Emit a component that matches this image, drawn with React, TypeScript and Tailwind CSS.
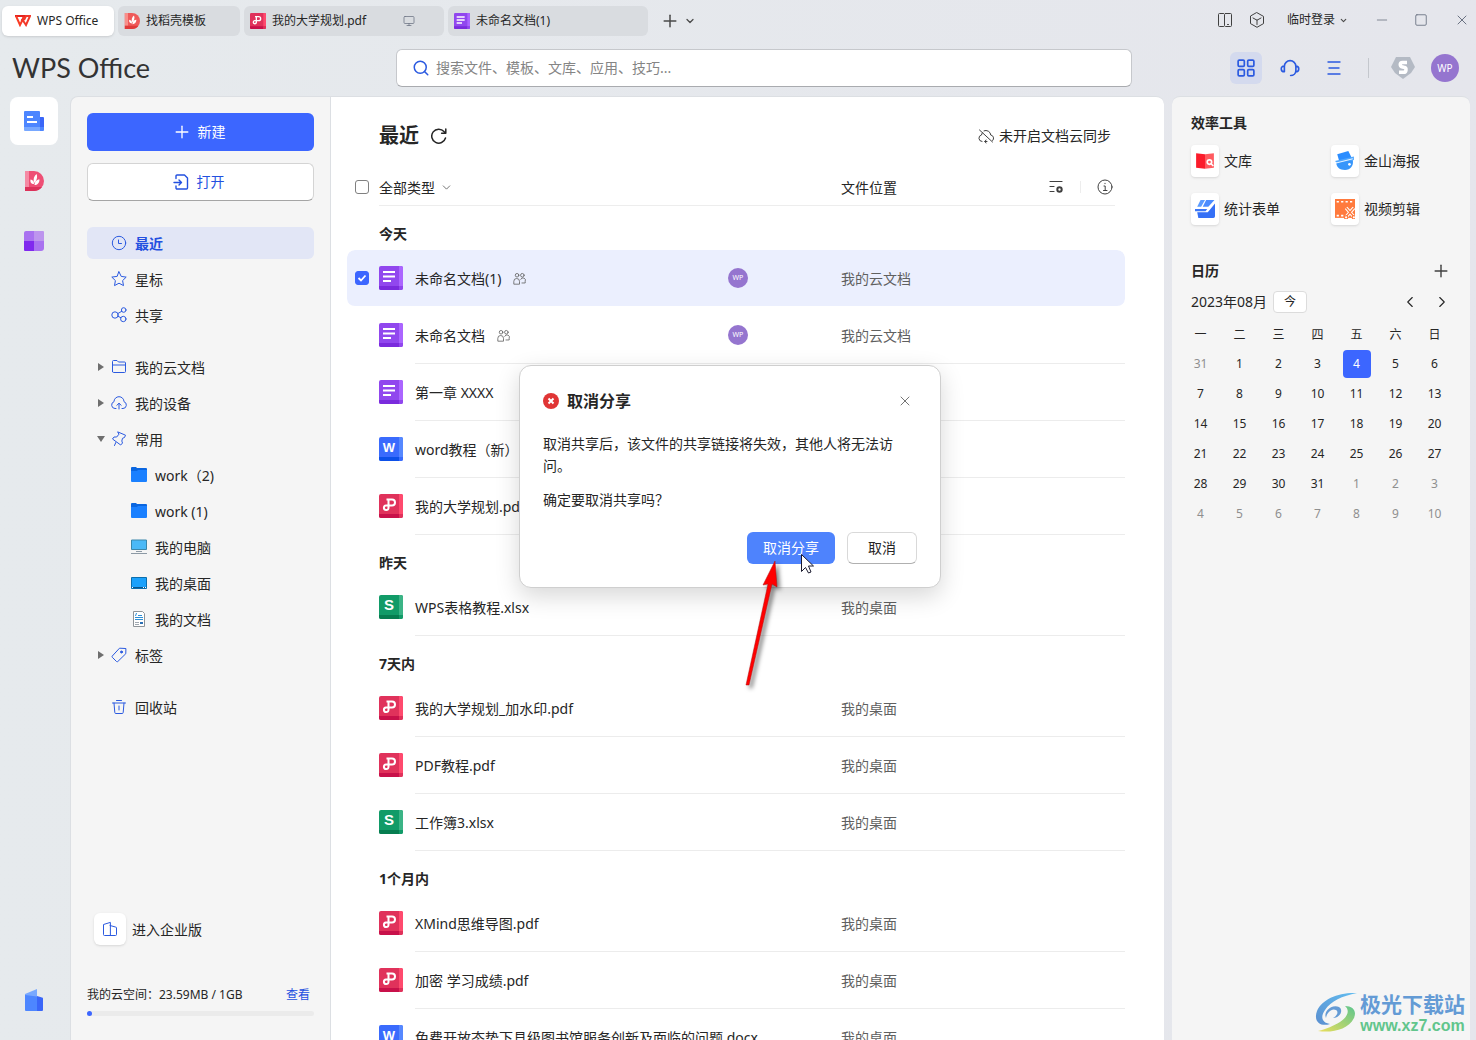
import React from 'react';
import { ChevronDown, ChevronLeft, ChevronRight, Minus, Monitor, Plus, Search, Square, X } from 'lucide-react';

type FileKind = 'doc' | 'word' | 'pdf' | 'sheet';

type FileItem = {
  name: string;
  kind: FileKind;
  location: string;
  shared?: boolean;
  selected?: boolean;
};

const groups: { label: string; files: FileItem[] }[] = [
  {
    label: '今天',
    files: [
      { name: '未命名文档(1)', kind: 'doc', location: '我的云文档', shared: true, selected: true },
      { name: '未命名文档', kind: 'doc', location: '我的云文档', shared: true },
      { name: '第一章 XXXX', kind: 'doc', location: '我的云文档' },
      { name: 'word教程（新）.docx', kind: 'word', location: '我的桌面' },
      { name: '我的大学规划.pdf', kind: 'pdf', location: '我的桌面' },
    ],
  },
  { label: '昨天', files: [{ name: 'WPS表格教程.xlsx', kind: 'sheet', location: '我的桌面' }] },
  {
    label: '7天内',
    files: [
      { name: '我的大学规划_加水印.pdf', kind: 'pdf', location: '我的桌面' },
      { name: 'PDF教程.pdf', kind: 'pdf', location: '我的桌面' },
      { name: '工作簿3.xlsx', kind: 'sheet', location: '我的桌面' },
    ],
  },
  {
    label: '1个月内',
    files: [
      { name: 'XMind思维导图.pdf', kind: 'pdf', location: '我的桌面' },
      { name: '加密 学习成绩.pdf', kind: 'pdf', location: '我的桌面' },
      { name: '免费开放态势下县级图书馆服务创新及面临的问题.docx', kind: 'word', location: '我的桌面' },
    ],
  },
];

const weekdays = ['一', '二', '三', '四', '五', '六', '日'];
const weeks = [
  [31, 1, 2, 3, 4, 5, 6],
  [7, 8, 9, 10, 11, 12, 13],
  [14, 15, 16, 17, 18, 19, 20],
  [21, 22, 23, 24, 25, 26, 27],
  [28, 29, 30, 31, 1, 2, 3],
  [4, 5, 6, 7, 8, 9, 10],
];

const kindColors = {
  doc: { base: '#9147ee', side: '#ab65ff', foot: '#7a2bdd' },
  word: { base: '#3a6bfd', side: '#5688ff', foot: '#0d50e8' },
  pdf: { base: '#e0325b', side: '#ff4a6e', foot: '#c8114a' },
  sheet: { base: '#119b68', side: '#3bb486', foot: '#067d50' },
};

const FileIcon = ({ kind, size = 24 }: { kind: FileKind; size?: number }) => {
  const c = kindColors[kind];
  return (
    <svg width={size} height={size} viewBox="0 0 24 24" className="shrink-0">
      <rect width="24" height="24" rx="2" fill={c.base} />
      <path d="M20 0h2a2 2 0 0 1 2 2v18h-4z" fill={c.side} />
      <path d="M0 20h20v4H2a2 2 0 0 1-2-2z" fill={c.foot} />
      <path d="M20 20h4v2a2 2 0 0 1-2 2h-2z" fill={c.base} />
      {kind === 'doc' && <path d="M4 6h12M4 10.5h12M4 15h8" stroke="#fff" strokeWidth="2" />}
      {kind === 'pdf' && (
        <path
          d="M7.5 5.500H13a3 3 0 0 1 0 6H7a2.300 2.300 0 1 0 2.500 2.500V5.500"
          fill="none"
          stroke="#fff"
          strokeWidth="2"
        />
      )}
      {(kind === 'word' || kind === 'sheet') && (
        <text
          x="10"
          y="15"
          textAnchor="middle"
          fontSize={kind === 'word' ? 13 : 15}
          fontWeight="700"
          fill="#fff"
          fontFamily="Liberation Sans, sans-serif"
        >
          {kind === 'word' ? 'W' : 'S'}
        </text>
      )}
    </svg>
  );
};

const TemplateIcon = ({ size = 20, color = '#ee4f75', dark = '#dc315a', light = '#f58aa4' }) => (
  <svg width={size} height={size} viewBox="0 0 20 20" className="shrink-0">
    <path d="M1 0h9a10 10 0 0 1 0 20H1z" fill={color} />
    <path d="M1 0h4v16H1z" fill={light} />
    <path d="M1 16h17a10 10 0 0 1-8 4H1z" fill={dark} />
    <path d="M10 13c-3 0-4-2-3.500-4.500C9 9 10 10.500 10 13zM10 12c-1-4 0-7 2.500-9 1.500 3.500 0 7-2.500 9zM10.500 14c0-3 2-5.500 5-5.500 0 3.500-2 5.500-5 5.500z" fill="#fff" />
  </svg>
);

const WpsMark = () => (
  <svg width="16" height="12" viewBox="0 0 16 12" className="shrink-0" fill="none" strokeWidth="2">
    <path d="M0 1h9.500L6.500 6" stroke="#e4231f" />
    <path d="M1 1l4 9 4-8" stroke="#fa3c24" />
    <path d="M7 4l4 6 4-9h-4l-2 4" stroke="#f2382a" />
  </svg>
);

// Thin outline icon on a 16px grid
const Line = ({ size = 16, width = 1, children }: { size?: number; width?: number; children: React.ReactNode }) => (
  <svg
    width={size}
    height={size}
    viewBox="0 0 16 16"
    fill="none"
    stroke="currentColor"
    strokeWidth={width}
    strokeLinecap="round"
    strokeLinejoin="round"
    className="shrink-0"
  >
    {children}
  </svg>
);

const icons = {
  clock: <Line><circle cx="8" cy="8" r="6.700" /><path d="M7.500 5v3.500h3" /></Line>,
  star: <Line><path d="M8 .8l2.200 4.600 5 .7-3.600 3.500.9 5L8 12.200l-4.500 2.400.9-5L.8 6.100l5-.7z" /></Line>,
  share: <Line><circle cx="4" cy="8" r="3.200" /><circle cx="12.700" cy="3" r="2.300" /><circle cx="12.300" cy="12" r="2.700" /><path d="M7 6.500l3.700-2.200M7 9.300l2.700 1.300" /></Line>,
  cloudFolder: <Line><path d="M1.500 12.500v-10a1 1 0 0 1 1-1h3.500l1.500 1.500h6a1 1 0 0 1 1 1v8.500a1 1 0 0 1-1 1h-11a1 1 0 0 1-1-1zM1.500 6h13" /></Line>,
  device: <Line><path d="M5 13.500H4A3.500 3.500 0 0 1 3 6.700a5 5 0 0 1 10 0 3.500 3.500 0 0 1-1 6.800h-1M8 14V8.500M5.800 10.300L8 8.200l2.200 2.100" /></Line>,
  pin: <Line><path d="M7 1l7.500 3.200-1 2.300-2 .8-.7 2.700.7 2-1.800 2L1.500 8 3 6h2.700l2-2.500zM4.800 11.500L3.500 14.500" /></Line>,
  tag: <Line><path d="M14.500 1.500l-6-.3L1.300 9a1 1 0 0 0 0 1.300L5.500 14.500a1 1 0 0 0 1.300 0L14.500 7z" /><circle cx="10.500" cy="5" r="1" fill="currentColor" /></Line>,
  trash: <Line><path d="M5.500 1.500h5M1.500 4h13M3 4l.8 9.500a1 1 0 0 0 1 1h6.400a1 1 0 0 0 1-1L13 4M8 7v4" /></Line>,
};

const FolderIcon = () => (
  <svg width="16" height="16" viewBox="0 0 16 16" className="shrink-0">
    <path d="M0 1a1 1 0 0 1 1-1h4l1 1h9a1 1 0 0 1 1 1v3H0z" fill="#0a66e0" />
    <path d="M0 4h6l1-1h9v11a1 1 0 0 1-1 1H1a1 1 0 0 1-1-1z" fill="#1a80ff" />
  </svg>
);

const ComputerIcon = () => (
  <svg width="16" height="16" viewBox="0 0 16 16" className="shrink-0">
    <path d="M.5 1h15v9.500H.5z" fill="#4bb9f7" stroke="#3b87ab" />
    <path d="M5 12.500h6M0 14.500h16" stroke="#8d9aa5" />
  </svg>
);

const DesktopIcon = () => (
  <svg width="16" height="16" viewBox="0 0 16 16" className="shrink-0">
    <path d="M.5 2.500h15v11H.5z" fill="#1ba1fb" stroke="#0b6ead" />
    <path d="M1 12.500h14" stroke="#0a558c" />
    <path d="M1 12.500h1m10 0h1m1 0h1" stroke="#fff" />
  </svg>
);

const DocumentIcon = () => (
  <svg width="16" height="16" viewBox="0 0 16 16" className="shrink-0">
    <path d="M2.500.5h9l2 2v13h-11z" fill="#fff" stroke="#8e9499" />
    <path d="M4 6.500h8M4 8.500h8M7 4.500h4" stroke="#2d8fd6" />
    <path d="M4 11.500h4M4 13.500h4" stroke="#a0a8b0" />
    <path d="M9 11h3v2H9z" fill="#2a6fb5" />
    <path d="M4.500 5l1-3" stroke="#2d8fd6" />
  </svg>
);

const navGroups = [
  [
    { label: '最近', icon: icons.clock, active: true },
    { label: '星标', icon: icons.star },
    { label: '共享', icon: icons.share },
  ],
  [
    { label: '我的云文档', icon: icons.cloudFolder, arrow: 'right' },
    { label: '我的设备', icon: icons.device, arrow: 'right' },
    { label: '常用', icon: icons.pin, arrow: 'down' },
    { label: 'work（2)', icon: <FolderIcon />, child: true },
    { label: 'work (1)', icon: <FolderIcon />, child: true },
    { label: '我的电脑', icon: <ComputerIcon />, child: true },
    { label: '我的桌面', icon: <DesktopIcon />, child: true },
    { label: '我的文档', icon: <DocumentIcon />, child: true },
    { label: '标签', icon: icons.tag, arrow: 'right' },
  ],
  [{ label: '回收站', icon: icons.trash }],
] as { label: string; icon: React.ReactNode; active?: boolean; arrow?: string; child?: boolean }[][];

const NavArrow = ({ dir }: { dir?: string }) => (
  <svg width="8" height="8" viewBox="0 0 8 8" className="shrink-0" fill="#6e6e6e">
    {dir === 'right' && <path d="M1 0l6 4-6 4z" />}
    {dir === 'down' && <path d="M0 1h8L4 7z" />}
  </svg>
);

const TitleBar = () => (
  <header className="flex items-center justify-between pt-1.5">
    <div className="flex items-center gap-1 pl-0.5 text-xs">
      <button className="flex h-[30px] w-28 items-center gap-1.5 rounded-md bg-white pl-[13px] shadow">
        <WpsMark />
        WPS Office
      </button>
      <button className="flex h-[30px] w-[122px] items-center gap-1.5 rounded-md bg-[#d9dce0] pl-1.5">
        <TemplateIcon size={16} color="#ef5a5a" dark="#e03a3a" light="#f88f8a" />
        找稻壳模板
      </button>
      <button className="flex h-[30px] w-[200px] items-center gap-1.5 rounded-md bg-[#d9dce0] pl-1.5">
        <FileIcon kind="pdf" size={16} />
        我的大学规划.pdf
        <Monitor size={12} strokeWidth={1.5} className="mr-[29px] ml-auto text-gray-500" />
      </button>
      <button className="flex h-[30px] w-[200px] items-center gap-1.5 rounded-md bg-[#d9dce0] pl-1.5">
        <FileIcon kind="doc" size={16} />
        未命名文档(1)
      </button>
      <button aria-label="新建标签" className="ml-1 p-1">
        <Plus size={20} strokeWidth={1.8} className="text-[#4a4a4a]" />
      </button>
      <button aria-label="标签列表" className="-ml-1">
        <ChevronDown size={12} strokeWidth={2.5} className="text-[#4a4a4a]" />
      </button>
    </div>
    <div className="-mt-0.5 flex items-center text-xs">
      <button aria-label="手机" className="mr-4 text-[#404040]">
        <Line>
          <path d="M6.500 14.500h-4a1 1 0 0 1-1-1v-11a1 1 0 0 1 1-1h4M10.500 12.500h1" />
          <rect x="7.500" y="1.500" width="7" height="13" rx="1" />
        </Line>
      </button>
      <button aria-label="应用" className="mr-[22px] text-[#404040]">
        <Line><path d="M8 .7l6.500 3.700v7.200L8 15.300l-6.500-3.700V4.400zM4 6l4 2.200L12 6M8 8.200v4.300" /></Line>
      </button>
      <button className="flex items-center gap-1">
        临时登录
        <ChevronDown size={9} strokeWidth={3} className="text-[#4a4a4a]" />
      </button>
      <button aria-label="最小化" className="ml-[26px] text-gray-500">
        <Minus size={16} strokeWidth={1.2} />
      </button>
      <button aria-label="最大化" className="ml-[22px] text-gray-500">
        <Square size={14} strokeWidth={1.5} className="mx-0.5" />
      </button>
      <button aria-label="关闭" className="mr-1.5 ml-6 text-gray-500">
        <X size={16} strokeWidth={1.5} />
      </button>
    </div>
  </header>
);

const Avatar = ({ small = false }) => (
  <span
    className={
      small
        ? 'flex size-5 items-center justify-center rounded-full bg-[#9575cf] text-[7px] text-white'
        : 'flex size-7 items-center justify-center rounded-full bg-[#9575cf] text-[10px] text-white'
    }
  >
    WP
  </span>
);

const SearchBar = () => (
  <div className="flex h-[60px] items-center pt-1">
    <div className="w-[396px] shrink-0 pl-3 font-[Lato] text-[27px] leading-8 text-[#333]">WPS Office</div>
    <div className="flex h-[38px] w-[736px] shrink items-center gap-1.5 rounded-md border border-[#c6c8cc] border-b-[#a9abaf] bg-white px-[15px]">
      <Search size={18} strokeWidth={2} className="shrink-0 text-[#2b5ae0]" />
      <input
        type="search"
        aria-label="搜索"
        placeholder="搜索文件、模板、文库、应用、技巧..."
        className="w-full bg-transparent text-sm outline-none placeholder:text-[#858585]"
      />
    </div>
    <div className="ml-auto flex items-center pr-[17px] text-[#2b5ae0]">
      <button aria-label="应用中心" className="mr-[18px] flex size-8 items-center justify-center rounded-md bg-[#d4daee]">
        <Line size={18} width={1.5}>
          <rect x="1" y="1" width="5.500" height="5.500" rx="1" />
          <rect x="9.500" y="1" width="5.500" height="5.500" rx="1" />
          <rect x="1" y="9.500" width="5.500" height="5.500" rx="1" />
          <rect x="9.500" y="9.500" width="5.500" height="5.500" rx="1" />
        </Line>
      </button>
      <button aria-label="客服" className="mr-[26px]">
        <Line size={20} width={1.3}>
          <path d="M3.500 11V6.700a4.600 4.600 0 0 1 9.200 0v3.300c0 2.500-2 4-4.200 4M3.500 6.500C1.500 6.500 1 7.500 1 8.700s.5 2.300 2.500 2.300M12.700 6.500c2 0 2.300 1 2.300 2.200s-.5 2.300-2.500 2.300" />
        </Line>
      </button>
      <button aria-label="菜单" className="mr-[26px]">
        <Line size={16} width={1.4}><path d="M2 2h12M3 8h10M2 14h12" /></Line>
      </button>
      <span className="mr-[22px] h-5 w-px bg-[#c4c7cd]" />
      <svg width="24" height="22" viewBox="0 0 24 22" className="mr-4">
        <path d="M5 0h14l5 10-4 6-8 6-8-6-4-6z" fill="#b4bac4" />
        <path d="M16 5.500h-4.500c-3 0-3 4 0 4.500l1.500.3c3 .5 2.500 5-.5 5H8" fill="none" stroke="#fff" strokeWidth="3.500" />
      </svg>
      <Avatar />
    </div>
  </div>
);

const Rail = () => (
  <nav className="flex w-[70px] shrink-0 flex-col items-start gap-3 pt-px pb-4 pl-2.5">
    <button aria-label="文档" className="flex size-12 items-center justify-center rounded-lg bg-white">
      <svg width="20" height="20" viewBox="0 0 20 20">
        <path d="M16 6h3a1 1 0 0 1 1 1v9h-4z" fill="#3a66f8" />
        <path d="M1 0h14a1 1 0 0 1 1 1v15H0V1a1 1 0 0 1 1-1z" fill="#4d86ff" />
        <path d="M0 16h16v4H1a1 1 0 0 1-1-1z" fill="#78a8ff" />
        <path d="M16 16h4v3a1 1 0 0 1-1 1h-3z" fill="#4d86ff" />
        <path d="M3 6h6M3 11h10" stroke="#fff" strokeWidth="2" />
      </svg>
    </button>
    <button aria-label="稻壳" className="flex size-12 items-center justify-center">
      <TemplateIcon />
    </button>
    <button aria-label="应用" className="flex size-12 items-center justify-center">
      <svg width="20" height="20" viewBox="0 0 20 20">
        <path d="M2 0h8v10H0V2a2 2 0 0 1 2-2z" fill="#a972f0" />
        <path d="M10 0h9a1 1 0 0 1 1 1v9H10z" fill="#bd95ee" />
        <path d="M0 10h10v10H1a1 1 0 0 1-1-1z" fill="#8029ee" />
        <path d="M10 10h10v7a3 3 0 0 1-3 3h-7z" fill="#a972f0" />
      </svg>
    </button>
    <button aria-label="企业" className="mt-auto flex size-12 items-center justify-center">
      <svg width="18" height="22" viewBox="0 0 18 22">
        <path d="M0 5l12-5v8H0z" fill="#78a8ff" />
        <path d="M0 6l12 1.500V22H1a1 1 0 0 1-1-1z" fill="#4d86ff" />
        <path d="M12 7l5 1.500a1 1 0 0 1 1 1V21a1 1 0 0 1-1 1h-5z" fill="#3a66f8" />
      </svg>
    </button>
  </nav>
);

const Sidebar = () => (
  <aside className="flex w-[261px] shrink-0 flex-col rounded-tl-lg border-t border-r border-l border-[#dcdfe3] bg-[#f5f5f5] px-4 pt-4 text-sm">
    <button className="flex h-[38px] shrink-0 items-center justify-center gap-1.5 rounded-md bg-[#3c66ff] pr-1 text-white">
      <Plus size={20} strokeWidth={1.6} />
      新建
    </button>
    <button className="mt-3 flex h-[38px] shrink-0 items-center justify-center gap-2 rounded-md border border-[#d4d4d4] border-b-[#a5a5a5] bg-white pr-1 text-[#2350e0]">
      <Line width={1.4}><path d="M3 4.500V2a1 1 0 0 1 1-1h7.500L14.500 4v10a1 1 0 0 1-1 1H4a1 1 0 0 1-1-1v-2M1 8.500h7M6 6l2.500 2.500L6 11" /></Line>
      打开
    </button>
    <nav className="mt-[26px] flex flex-col gap-5">
      {navGroups.map((items, i) => (
        <ul key={i} className="flex flex-col gap-1">
          {items.map((item) => (
            <li key={item.label}>
              <a
                href="#"
                className={`flex h-8 items-center rounded-md pl-2.5 ${item.active ? 'bg-[#e2e6f6] font-bold text-[#2350e0]' : ''}`}
              >
                <NavArrow dir={item.arrow} />
                <span className={item.child ? 'ml-[26px]' : 'ml-1.5 text-[#2b5ae0]'}>{item.icon}</span>
                <span className="ml-2 pt-0.5">{item.label}</span>
              </a>
            </li>
          ))}
        </ul>
      ))}
    </nav>
    <div className="mt-auto pb-6">
      <button className="ml-[7px] flex items-center gap-1.5">
        <span className="flex size-8 items-center justify-center rounded-md bg-white text-[#2b5ae0] shadow">
          <Line><path d="M8 14.500H2.500a1 1 0 0 1-1-1v-10L8 1.500zM8 4.500l5.500 1.500a1 1 0 0 1 1 1v6.500a1 1 0 0 1-1 1H8" /></Line>
        </span>
        <span className="pt-0.5">进入企业版</span>
      </button>
      <div className="mt-[42px] flex items-center justify-between pr-1 text-xs leading-4">
        <span>我的云空间：23.59MB / 1GB</span>
        <a href="#" className="text-[#2350e0]">查看</a>
      </div>
      <div className="mt-2 h-[5px] rounded-full bg-[#ebebeb]">
        <div className="size-[5px] rounded-full bg-[#3c66ff]" />
      </div>
    </div>
  </aside>
);

const PeopleIcon = () => (
  <span className="text-[#606060]">
    <Line size={13}>
      <circle cx="5" cy="4" r="2.200" />
      <circle cx="11.500" cy="4" r="2.200" />
      <path d="M1 14.500V11.500a3.500 3.500 0 0 1 7 0v3zM9.500 9a3 3 0 0 1 5.500 2.500v2h-4" />
    </Line>
  </span>
);

const Check = ({ label, checked = false }: { label: string; checked?: boolean }) => (
  <label className="ml-2 flex size-3.5">
    <input
      type="checkbox"
      aria-label={label}
      defaultChecked={checked}
      className="peer size-3.5 shrink-0 appearance-none rounded-[3px] border border-[#808080] bg-white checked:border-[#3c66ff] checked:bg-[#3c66ff]"
    />
    <svg viewBox="0 0 14 14" className="pointer-events-none -ml-3.5 hidden size-3.5 shrink-0 peer-checked:block">
      <path d="M3.500 7l2.500 2.500 4.500-5" fill="none" stroke="#fff" strokeWidth="1.800" />
    </svg>
  </label>
);

const FileTable = () => (
  <table className="w-full table-fixed border-separate border-spacing-0 text-left text-sm">
    <colgroup>
      <col className="w-8" />
      <col className="w-9" />
      <col />
      <col className="w-[113px]" />
      <col className="w-[190px]" />
      <col className="w-[94px]" />
    </colgroup>
    <thead>
      <tr className="h-[38px]">
        <th className="font-normal"><Check label="全选" /></th>
        <th colSpan={3} className="border-b border-[#ededed] pt-0.5 font-normal">
          <div className="flex w-fit items-center">
            <select aria-label="文件类型" className="h-6 w-[61px] appearance-none bg-transparent outline-none">
              <option>全部类型</option>
            </select>
            <ChevronDown size={13} strokeWidth={1.6} className="pointer-events-none text-[#606060]" />
          </div>
        </th>
        <th className="border-b border-[#ededed] pt-0.5 font-normal">文件位置</th>
        <th className="font-normal">
          <div className="mr-2.5 flex h-[38px] items-center border-b border-[#ededed] pl-[17px] text-[#404040]">
            <button aria-label="列表设置">
              <Line size={16} width={1.2}>
                <path d="M2 2.500h12M2 7.500h4M2 12.500h4" />
                <circle cx="11.500" cy="10.500" r="2.200" strokeWidth="2" />
              </Line>
            </button>
            <span className="mr-4 ml-4 h-3 w-px bg-[#ededed]" />
            <button aria-label="详情">
              <Line><circle cx="8" cy="8" r="7" /><path d="M7 7h1.200v4.500M6.500 11.500h3.500M8 4.300v.4" /></Line>
            </button>
          </div>
        </th>
      </tr>
    </thead>
    {groups.map((group) => (
      <tbody key={group.label}>
        <tr className="h-11">
          <td />
          <th colSpan={5} className="pt-3 leading-5 font-bold">{group.label}</th>
        </tr>
        {group.files.map((file) => {
          const bg = file.selected ? 'bg-[#ebeffe] bg-clip-padding' : '';
          const lead = `border-b border-transparent ${bg}`;
          const cell = file.selected ? lead : 'border-b border-[#ececec]';
          return (
            <tr key={file.name} className="h-[57px]">
              <td className={`${lead} rounded-l-lg`}>
                {file.selected && <Check label={file.name} checked />}
              </td>
              <td className={lead}><FileIcon kind={file.kind} /></td>
              <td className={cell}>
                <span className="flex items-center gap-3 whitespace-nowrap">
                  <span className="pt-0.5">{file.name}</span>
                  {file.shared && <PeopleIcon />}
                </span>
              </td>
              <td className={cell}>{file.shared && <Avatar small />}</td>
              <td className={`${cell} pt-0.5 text-[#606060]`}>{file.location}</td>
              <td className={file.selected ? `${cell} rounded-r-lg` : cell} />
            </tr>
          );
        })}
      </tbody>
    ))}
  </table>
);

const Main = () => (
  <main className="min-w-0 flex-1 overflow-hidden rounded-tr-lg border-t border-[#dcdfe3] bg-white pr-[39px] pl-4">
    <div className="flex h-[71px] items-center justify-between pt-1.5 pr-3.5 pl-8">
      <div className="flex items-center gap-3">
        <h1 className="text-xl font-bold">最近</h1>
        <button aria-label="刷新">
          <Line width={1.5}><path d="M14.500 10a7 7 0 1 1-1.500-6.500l1.500 1.500M14.800 1v4.200h-4.200" /></Line>
        </button>
      </div>
      <button className="flex items-center gap-[5px] text-sm">
        <span className="text-[#404040]">
          <Line><path d="M1.500 2l13 12M4.500 4.700A5 5 0 0 0 3.500 7a3.300 3.300 0 0 0 .5 6.500M6 2.800A4.800 4.800 0 0 1 12.700 7a3.300 3.300 0 0 1 2 5.500M9 13.500H7m0 0l1-1.500m-1 1.500l1 1.500" /></Line>
        </span>
        未开启文档云同步
      </button>
    </div>
    <FileTable />
  </main>
);

const tools = [
  {
    label: '文库',
    icon: (
      <>
        <path d="M1 2l8 1v13l-8-1z" fill="#fb1c2b" />
        <path d="M9 3l8-1v13l-8 1z" fill="#ff5b60" />
        <circle cx="13" cy="10" r="2" fill="none" stroke="#fff" strokeWidth="1.500" />
        <path d="M14.500 11.500l2 2" stroke="#fff" strokeWidth="1.500" />
      </>
    ),
  },
  {
    label: '金山海报',
    icon: (
      <>
        <path d="M2 3l10-3 3 6-11 4z" fill="#2b8dff" />
        <path d="M0 9l17-4v3L3 12z" fill="#4da6ff" />
        <path d="M1 11l15-3c1 5-2 9-7 9s-7-2-8-6z" fill="#3796fb" />
        <path d="M1 10.800l15-3.800" stroke="#fff" strokeWidth=".8" />
        <circle cx="13" cy="12" r="1.200" fill="#fff" />
      </>
    ),
  },
  {
    label: '统计表单',
    icon: (
      <>
        <path d="M5 1h4L5.500 7H2z" fill="#5b9bff" />
        <path d="M10 1h7.500L12 7H7z" fill="#4b8cff" />
        <path d="M0 9h11l-1.500 2H0z" fill="#3b77f7" />
        <path d="M2 12h9.500L18 4v11.500a1.500 1.500 0 0 1-1.500 1.500H3z" fill="#3570f6" />
      </>
    ),
  },
  {
    label: '视频剪辑',
    icon: (
      <>
        <path d="M0 0h18v17H0z" fill="#ff7a3d" />
        <path d="M1.500 2.500h15M1.500 15h6" stroke="#fff" strokeWidth="1.500" strokeDasharray="2 2" />
        <path d="M10 8l7 8M17 8l-7 8" stroke="#fff" strokeWidth="3" />
        <path d="M10 8l7 8M17 8l-7 8" stroke="#ff7a3d" strokeWidth="1.300" />
        <circle cx="10" cy="16.500" r="1.500" fill="#fff" stroke="#ff7a3d" />
        <circle cx="17" cy="16.500" r="1.500" fill="#fff" stroke="#ff7a3d" />
      </>
    ),
  },
];

const RightPanel = () => (
  <aside className="mr-1.5 ml-2 w-[298px] shrink-0 rounded-t-lg border-t border-[#dcdfe3] bg-[#f5f5f5] px-[19px] pt-4 text-sm">
    <h2 className="leading-5 font-bold">效率工具</h2>
    <div className="mt-3 grid grid-cols-[140px_1fr] gap-y-4">
      {tools.map((tool) => (
        <a key={tool.label} href="#" className="flex items-center gap-[5px]">
          <span className="flex h-8 w-7 items-center justify-center rounded bg-white shadow">
            <svg width="20" height="20" viewBox="0 0 18 18">{tool.icon}</svg>
          </span>
          {tool.label}
        </a>
      ))}
    </div>
    <div className="mt-9 flex items-center justify-between">
      <h2 className="leading-5 font-bold">日历</h2>
      <button aria-label="添加日程"><Plus size={20} strokeWidth={1.7} className="text-[#404040]" /></button>
    </div>
    <div className="mt-2.5 flex items-center">
      <span>2023年08月</span>
      <button className="ml-1.5 h-[22px] w-[34px] rounded border border-[#dcdcdc] bg-white text-xs">今</button>
      <button aria-label="上个月" className="ml-auto"><ChevronLeft size={18} strokeWidth={1.5} /></button>
      <button aria-label="下个月" className="ml-3.5"><ChevronRight size={18} strokeWidth={1.5} /></button>
    </div>
    <table className="mt-1.5 -ml-2.5 w-[273px] table-fixed border-separate border-spacing-0 text-center text-xs">
      <thead>
        <tr className="h-[30px]">
          {weekdays.map((d) => (
            <th key={d} className="p-0 pt-0.5 font-normal">{d}</th>
          ))}
        </tr>
      </thead>
      <tbody>
        {weeks.map((week, row) => (
          <tr key={row} className="h-[30px]">
            {week.map((day, col) => {
              const outside = (row === 0 && day > 20) || (row > 3 && day < 20);
              if (row === 0 && day === 4) {
                return (
                  <td key={col} className="p-0">
                    <span className="mx-auto flex size-7 items-center justify-center rounded bg-[#3c66ff] text-white">{day}</span>
                  </td>
                );
              }
              return <td key={col} className={outside ? 'p-0 text-[#8f8f8f]' : 'p-0'}>{day}</td>;
            })}
          </tr>
        ))}
      </tbody>
    </table>
  </aside>
);

const CancelShareDialog = () => (
  <div
    role="dialog"
    aria-labelledby="dialog-title"
    className="absolute top-[365px] left-[519px] w-[422px] rounded-xl border border-[#cfcfcf] bg-white p-[23px] text-sm shadow-[0_8px_24px_rgba(0,0,0,0.16)]"
  >
    <div className="flex items-center">
      <svg width="16" height="16" viewBox="0 0 16 16">
        <circle cx="8" cy="8" r="8" fill="#e03535" />
        <path d="M5.500 5.500l5 5M10.500 5.500l-5 5" stroke="#fff" strokeWidth="2" />
      </svg>
      <h2 id="dialog-title" className="ml-2 text-base leading-6 font-bold">取消分享</h2>
      <button aria-label="关闭" className="mr-1 ml-auto"><X size={16} strokeWidth={1.2} className="text-[#505050]" /></button>
    </div>
    <p className="mt-5 leading-[22px]">取消共享后，该文件的共享链接将失效，其他人将无法访问。</p>
    <p className="mt-3 leading-[22px]">确定要取消共享吗？</p>
    <div className="mt-[21px] flex justify-end gap-3">
      <button className="h-8 w-[88px] rounded-md bg-[#4e83fd] text-white">取消分享</button>
      <button className="h-8 w-[70px] rounded-md border border-[#d9d9d9] border-b-[#b0b0b0] bg-white">取消</button>
    </div>
  </div>
);

const Pointer = () => (
  <svg width="80" height="140" viewBox="0 0 80 140" className="pointer-events-none absolute top-[553px] left-[740px]">
    <g className="drop-shadow-[3px_3px_2px_rgba(0,0,0,0.5)]">
      <path d="M35 8l2 26-5-3L9 132H6L28 31l-5 1z" fill="#f00" stroke="#b01010" strokeWidth=".5" />
    </g>
    <path d="M61.500 1.500v17l4-4 3 5.500 2.500-1-2.500-6h5z" fill="#fff" stroke="#1a1a2e" />
  </svg>
);

const Watermark = () => (
  <div className="pointer-events-none absolute right-[11px] bottom-1.5 flex items-center gap-0.5">
    <svg width="44" height="42" viewBox="0 0 44 42">
      <defs>
        <linearGradient id="swirl-blue" x1="0" y1="1" x2="1" y2="0">
          <stop offset="0" stopColor="#5b8fd0" />
          <stop offset="1" stopColor="#62bdf0" />
        </linearGradient>
        <linearGradient id="swirl-green" x1="0" y1="1" x2="1" y2="0">
          <stop offset="0" stopColor="#ecdf5b" />
          <stop offset="1" stopColor="#5cc58e" />
        </linearGradient>
      </defs>
      <path d="M43 2C25 1 8 8 3 20c-4 11 4 16 13 13-8-1-10-7-5-14C17 10 28 5 43 2z" fill="url(#swirl-blue)" />
      <path d="M12 27c-3-7 6-14 13-11 5 3 1 11-6 11 4-2 6-6 3-8-4-2-9 2-10 8z" fill="#649bd5" />
      <path d="M4 40c14 2 30-1 36-13 3-7-1-12-9-12 5 4 3 11-5 16-7 4-13 7-22 9z" fill="url(#swirl-green)" />
    </svg>
    <div className="text-center">
      <div className="text-[21px] leading-7 font-bold text-[#649bd5]">极光下载站</div>
      <div className="font-['Liberation_Sans'] text-base leading-4 font-bold text-[#62c58c]">www.xz7.com</div>
    </div>
  </div>
);

const App = () => {
  return (
    <div className="relative flex h-screen flex-col overflow-hidden bg-gradient-to-r from-[#e6eaed] to-[#e5e6ec] font-['Noto_Sans','Noto_Sans_CJK_SC',sans-serif] text-[#262626]">
      <TitleBar />
      <SearchBar />
      <div className="flex min-h-0 flex-1">
        <Rail />
        <Sidebar />
        <Main />
        <RightPanel />
      </div>
      <CancelShareDialog />
      <Pointer />
      <Watermark />
    </div>
  );
};

export default App;
